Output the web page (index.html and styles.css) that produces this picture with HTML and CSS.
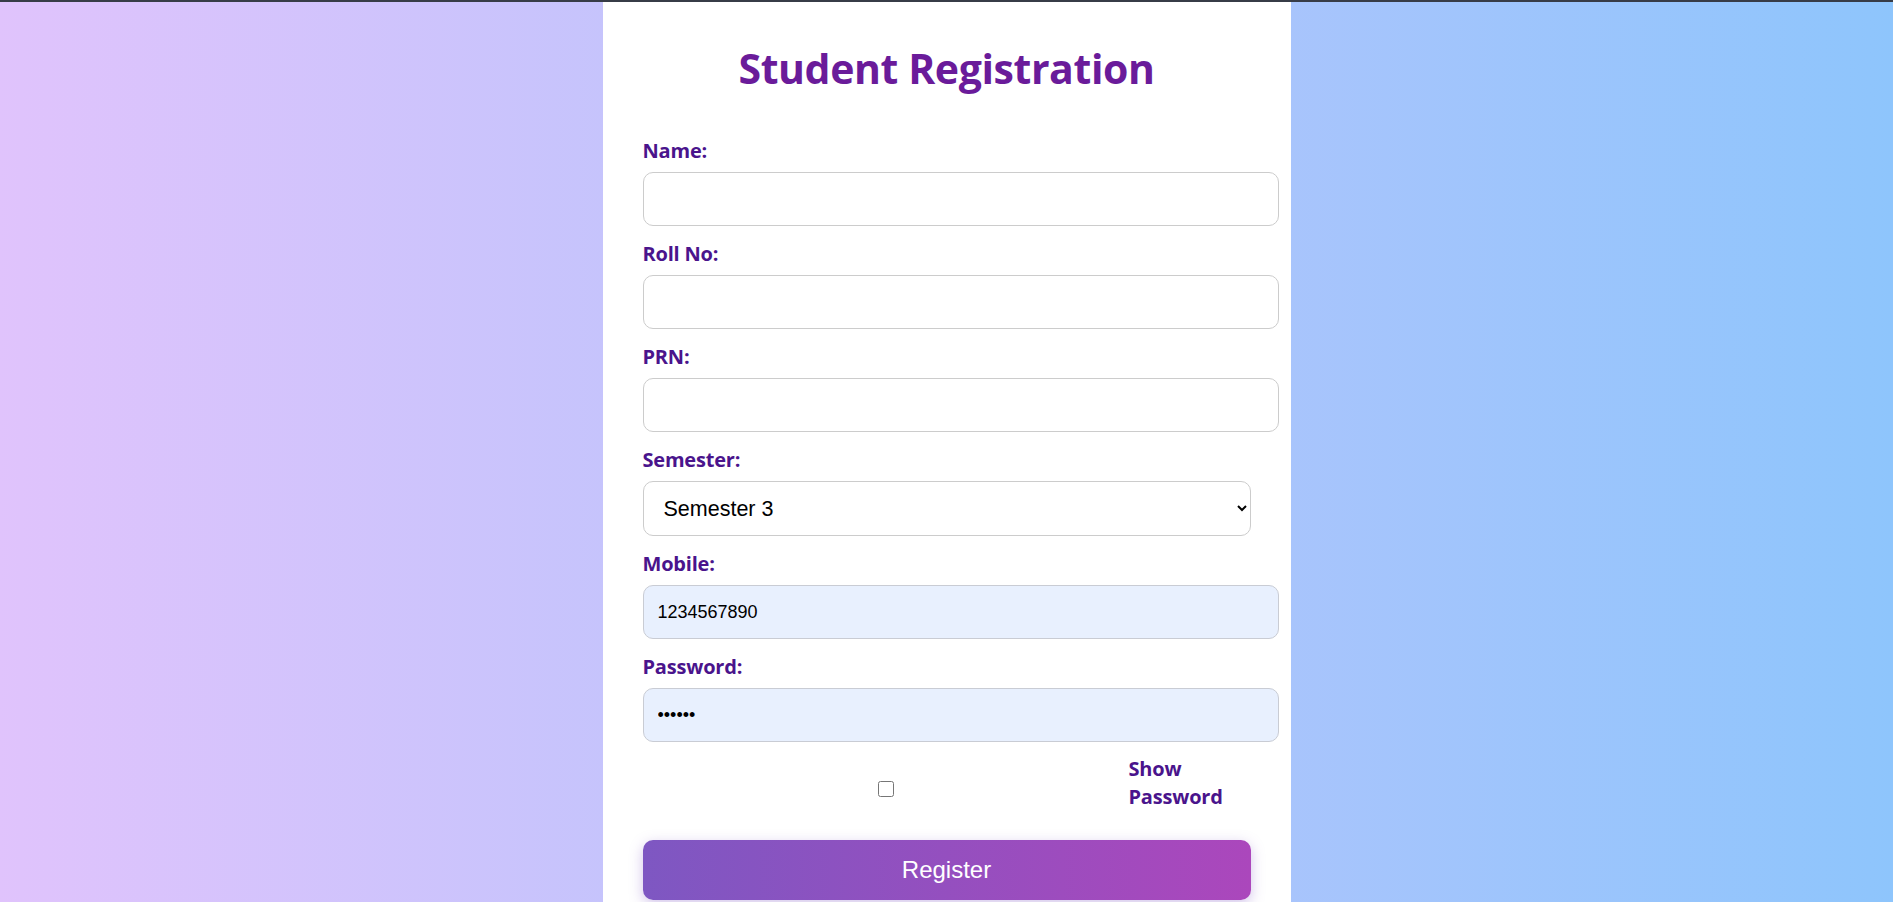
FILE: index.html
```html
<!DOCTYPE html>
<html lang="en">
<head>
<meta charset="utf-8">
<title>Student Registration</title>
<link rel="stylesheet" href="styles.css">
</head>
<body>
  <main class="card">
    <h2 class="title">Student Registration</h2>
    <form class="form">
      <label class="label" for="name">Name:</label>
      <input class="input" type="text" id="name">

      <label class="label" for="roll">Roll No:</label>
      <input class="input" type="text" id="roll">

      <label class="label" for="prn">PRN:</label>
      <input class="input" type="text" id="prn">

      <label class="label" for="sem">Semester:</label>
      <select class="select" id="sem">
        <option>Semester 1</option>
        <option>Semester 2</option>
        <option selected>Semester 3</option>
        <option>Semester 4</option>
      </select>

      <label class="label" for="mobile">Mobile:</label>
      <input class="input filled" type="text" id="mobile" value="1234567890">

      <label class="label" for="pass">Password:</label>
      <input class="input filled" type="password" id="pass" value="123456">

      <div class="show-row">
        <div class="check-wrap"><input class="check" type="checkbox" id="show"></div>
        <label class="label show-label" for="show">Show Password</label>
      </div>

      <button class="btn" type="button">Register</button>
    </form>
  </main>
</body>
</html>
```

FILE: styles.css
```css
html, body {
  margin: 0;
  padding: 0;
}
body {
  border-top: 2px solid #373c47;
  min-height: 100vh;
  background: linear-gradient(to right, #e0c3fc, #8ec5fc);
  display: flex;
  justify-content: center;
  align-items: flex-start;
  font-family: "Open Sans", "Noto Sans", sans-serif;
}
.card {
  width: 688px;
  box-sizing: border-box;
  background: #ffffff;
  padding: 37px 40px 60px;
  min-height: 960px;
}
.title {
  margin: 0 0 39px;
  text-align: center;
  color: #6a1b9a;
  font-size: 41px;
  line-height: 58px;
  font-weight: 700;
  letter-spacing: -0.4px;
}
.form {
  display: flex;
  flex-direction: column;
  align-items: flex-start;
}
.label {
  display: block;
  color: #4a148c;
  font-weight: 700;
  font-size: 20px;
  line-height: 29px;
  margin: 0 0 7px;
  letter-spacing: -0.2px;
}
.input {
  box-sizing: content-box;
  width: 100%;
  height: 22px;
  padding: 15px 12px 15px 14px;
  margin: 0 0 13px;
  border: 1px solid #cccccc;
  border-radius: 10px;
  background: #ffffff;
  font-family: "Liberation Sans", Arial, sans-serif;
  font-size: 18px;
  line-height: 22px;
  color: #000;
  outline: none;
}
.input.filled {
  background: #e8f0fe;
  border-color: #c9ccd4;
}
.select {
  box-sizing: border-box;
  width: 100%;
  height: 55px;
  padding: 0 12px 0 16px;
  margin: 0 0 13px;
  border: 1px solid #cccccc;
  border-radius: 10px;
  background: #ffffff;
  font-family: "Liberation Sans", Arial, sans-serif;
  font-size: 21.5px;
  color: #000;
}
.show-row {
  display: flex;
  align-items: center;
  width: 100%;
}
.check-wrap {
  flex: 1;
  display: flex;
  justify-content: center;
}
.check {
  width: 16px;
  height: 16px;
  margin: 12px 0 0;
}
.show-label {
  width: 122px;
  margin: 0;
  line-height: 28px;
}
.btn {
  width: 100%;
  height: 60px;
  margin-top: 29px;
  border: none;
  border-radius: 10px;
  background: linear-gradient(to right, #7e57c2, #ab47bc);
  color: #ffffff;
  font-family: "Liberation Sans", Arial, sans-serif;
  font-size: 24px;
  box-shadow: 0 4px 14px rgba(126, 87, 194, 0.35);
  cursor: pointer;
}
```
